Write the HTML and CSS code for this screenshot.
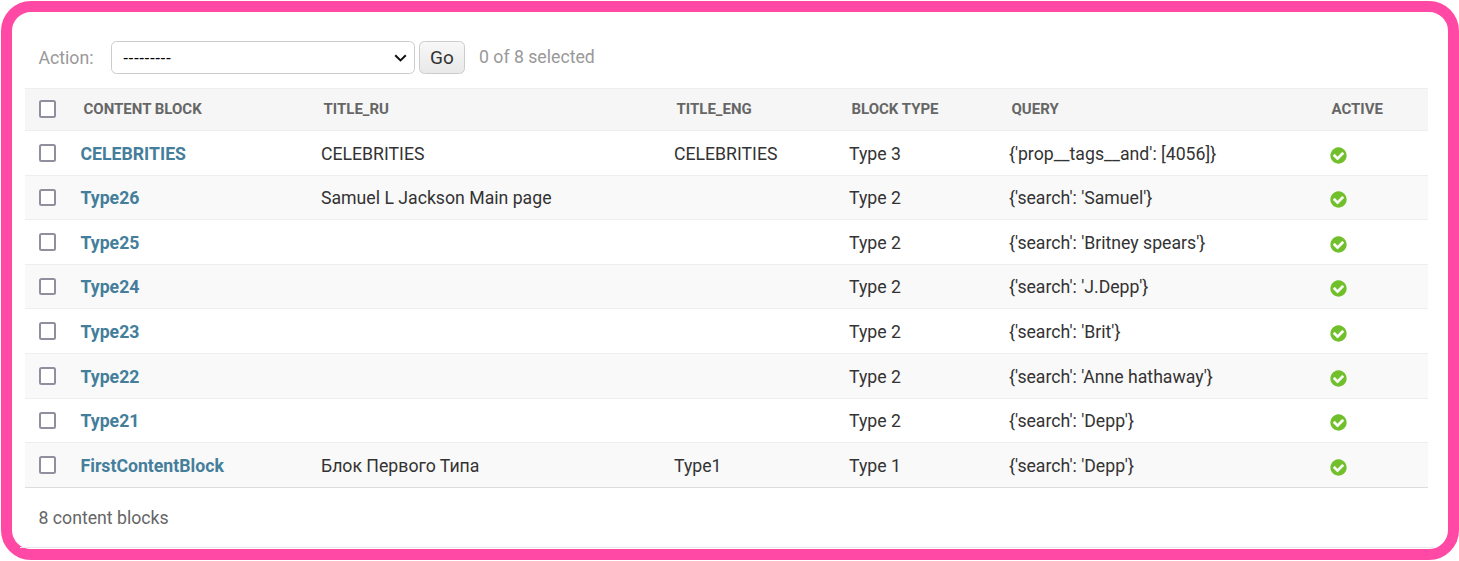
FILE: index.html
```html
<!DOCTYPE html>
<html lang="en">
<head>
<meta charset="utf-8">
<title>Content blocks</title>
<link rel="stylesheet" href="styles.css">
</head>
<body>
<main class="frame">
  <form class="actions">
    <label class="action-label" for="action">Action:</label>
    <select id="action" class="action-select"><option>---------</option></select>
    <button type="button" class="go">Go</button>
    <span class="counter">0 of 8 selected</span>
  </form>
  <table class="results">
    <colgroup>
      <col class="c-check"><col class="c-name"><col class="c-ru"><col class="c-eng"><col class="c-type"><col class="c-query"><col class="c-active">
    </colgroup>
    <thead>
      <tr>
        <th class="check"><span class="box"></span></th>
        <th><span class="th-text">CONTENT BLOCK</span></th>
        <th><span class="th-text">TITLE_RU</span></th>
        <th><span class="th-text">TITLE_ENG</span></th>
        <th><span class="th-text">BLOCK TYPE</span></th>
        <th><span class="th-text">QUERY</span></th>
        <th><span class="th-text">ACTIVE</span></th>
      </tr>
    </thead>
    <tbody>
      <tr>
        <td class="check"><span class="box"></span></td>
        <td><a href="#">CELEBRITIES</a></td><td>CELEBRITIES</td><td>CELEBRITIES</td><td>Type 3</td><td>{'prop__tags__and': [4056]}</td>
        <td><svg class="yes" viewBox="0 0 1792 1792"><path fill="#70bf2b" d="M1412 734q0-28-18-46l-91-90q-19-19-45-19t-45 19l-408 407-226-226q-19-19-45-19t-45 19l-91 90q-18 18-18 46 0 27 18 45l362 362q19 19 45 19 27 0 46-19l543-543q18-18 18-45zm252 162q0 209-103 385.5t-279.5 279.5-385.5 103-385.5-103-279.5-279.5-103-385.5 103-385.5 279.5-279.5 385.5-103 385.5 103 279.5 279.5 103 385.5z"/></svg></td>
      </tr>
      <tr>
        <td class="check"><span class="box"></span></td>
        <td><a href="#">Type26</a></td><td>Samuel L Jackson Main page</td><td></td><td>Type 2</td><td>{'search': 'Samuel'}</td>
        <td><svg class="yes" viewBox="0 0 1792 1792"><path fill="#70bf2b" d="M1412 734q0-28-18-46l-91-90q-19-19-45-19t-45 19l-408 407-226-226q-19-19-45-19t-45 19l-91 90q-18 18-18 46 0 27 18 45l362 362q19 19 45 19 27 0 46-19l543-543q18-18 18-45zm252 162q0 209-103 385.5t-279.5 279.5-385.5 103-385.5-103-279.5-279.5-103-385.5 103-385.5 279.5-279.5 385.5-103 385.5 103 279.5 279.5 103 385.5z"/></svg></td>
      </tr>
      <tr>
        <td class="check"><span class="box"></span></td>
        <td><a href="#">Type25</a></td><td></td><td></td><td>Type 2</td><td>{'search': 'Britney spears'}</td>
        <td><svg class="yes" viewBox="0 0 1792 1792"><path fill="#70bf2b" d="M1412 734q0-28-18-46l-91-90q-19-19-45-19t-45 19l-408 407-226-226q-19-19-45-19t-45 19l-91 90q-18 18-18 46 0 27 18 45l362 362q19 19 45 19 27 0 46-19l543-543q18-18 18-45zm252 162q0 209-103 385.5t-279.5 279.5-385.5 103-385.5-103-279.5-279.5-103-385.5 103-385.5 279.5-279.5 385.5-103 385.5 103 279.5 279.5 103 385.5z"/></svg></td>
      </tr>
      <tr>
        <td class="check"><span class="box"></span></td>
        <td><a href="#">Type24</a></td><td></td><td></td><td>Type 2</td><td>{'search': 'J.Depp'}</td>
        <td><svg class="yes" viewBox="0 0 1792 1792"><path fill="#70bf2b" d="M1412 734q0-28-18-46l-91-90q-19-19-45-19t-45 19l-408 407-226-226q-19-19-45-19t-45 19l-91 90q-18 18-18 46 0 27 18 45l362 362q19 19 45 19 27 0 46-19l543-543q18-18 18-45zm252 162q0 209-103 385.5t-279.5 279.5-385.5 103-385.5-103-279.5-279.5-103-385.5 103-385.5 279.5-279.5 385.5-103 385.5 103 279.5 279.5 103 385.5z"/></svg></td>
      </tr>
      <tr>
        <td class="check"><span class="box"></span></td>
        <td><a href="#">Type23</a></td><td></td><td></td><td>Type 2</td><td>{'search': 'Brit'}</td>
        <td><svg class="yes" viewBox="0 0 1792 1792"><path fill="#70bf2b" d="M1412 734q0-28-18-46l-91-90q-19-19-45-19t-45 19l-408 407-226-226q-19-19-45-19t-45 19l-91 90q-18 18-18 46 0 27 18 45l362 362q19 19 45 19 27 0 46-19l543-543q18-18 18-45zm252 162q0 209-103 385.5t-279.5 279.5-385.5 103-385.5-103-279.5-279.5-103-385.5 103-385.5 279.5-279.5 385.5-103 385.5 103 279.5 279.5 103 385.5z"/></svg></td>
      </tr>
      <tr>
        <td class="check"><span class="box"></span></td>
        <td><a href="#">Type22</a></td><td></td><td></td><td>Type 2</td><td>{'search': 'Anne hathaway'}</td>
        <td><svg class="yes" viewBox="0 0 1792 1792"><path fill="#70bf2b" d="M1412 734q0-28-18-46l-91-90q-19-19-45-19t-45 19l-408 407-226-226q-19-19-45-19t-45 19l-91 90q-18 18-18 46 0 27 18 45l362 362q19 19 45 19 27 0 46-19l543-543q18-18 18-45zm252 162q0 209-103 385.5t-279.5 279.5-385.5 103-385.5-103-279.5-279.5-103-385.5 103-385.5 279.5-279.5 385.5-103 385.5 103 279.5 279.5 103 385.5z"/></svg></td>
      </tr>
      <tr>
        <td class="check"><span class="box"></span></td>
        <td><a href="#">Type21</a></td><td></td><td></td><td>Type 2</td><td>{'search': 'Depp'}</td>
        <td><svg class="yes" viewBox="0 0 1792 1792"><path fill="#70bf2b" d="M1412 734q0-28-18-46l-91-90q-19-19-45-19t-45 19l-408 407-226-226q-19-19-45-19t-45 19l-91 90q-18 18-18 46 0 27 18 45l362 362q19 19 45 19 27 0 46-19l543-543q18-18 18-45zm252 162q0 209-103 385.5t-279.5 279.5-385.5 103-385.5-103-279.5-279.5-103-385.5 103-385.5 279.5-279.5 385.5-103 385.5 103 279.5 279.5 103 385.5z"/></svg></td>
      </tr>
      <tr>
        <td class="check"><span class="box"></span></td>
        <td><a href="#">FirstContentBlock</a></td><td>Блок Первого Типа</td><td>Type1</td><td>Type 1</td><td>{'search': 'Depp'}</td>
        <td><svg class="yes" viewBox="0 0 1792 1792"><path fill="#70bf2b" d="M1412 734q0-28-18-46l-91-90q-19-19-45-19t-45 19l-408 407-226-226q-19-19-45-19t-45 19l-91 90q-18 18-18 46 0 27 18 45l362 362q19 19 45 19 27 0 46-19l543-543q18-18 18-45zm252 162q0 209-103 385.5t-279.5 279.5-385.5 103-385.5-103-279.5-279.5-103-385.5 103-385.5 279.5-279.5 385.5-103 385.5 103 279.5 279.5 103 385.5z"/></svg></td>
      </tr>
    </tbody>
  </table>
  <p class="paginator">8 content blocks</p>
</main>
</body>
</html>
```

FILE: styles.css
```css
* { box-sizing: border-box; }
html, body { margin: 0; height: 100%; background: #fff; }
body { padding: 1px 0 1px 1px; font-family: Roboto, "Noto Sans", sans-serif; color: #333; overflow: hidden; }
.frame {
  height: 559px;
  border: 11px solid #ff49a4;
  border-radius: 30px;
  padding: 0 19px 1px 13px;
  background: #fff;
  display: flex;
  flex-direction: column;
}
.actions {
  flex: none;
  height: 76px;
  padding: 29px 0 0 13.5px;
  display: flex;
  align-items: flex-start;
  font-size: 17.68px;
}
.action-label { color: #999; width: 72.5px; line-height: 34px; }
.action-select {
  appearance: none;
  width: 304px;
  height: 33px;
  border: 1px solid #ccc;
  border-radius: 5.5px;
  background: #fff url("data:image/svg+xml,%3Csvg xmlns='http://www.w3.org/2000/svg' width='13' height='8' viewBox='0 0 13 8'%3E%3Cpath d='M1.2 1.2 6.5 6.4 11.8 1.2' fill='none' stroke='%23111' stroke-width='2'/%3E%3C/svg%3E") no-repeat right 7px center;
  color: #000;
  font-family: "Liberation Sans", sans-serif;
  font-size: 16px;
  padding: 0 24px 0 11px;
}
.go {
  margin-left: 4px;
  width: 46px;
  height: 33px;
  border: 1px solid #ccc;
  border-radius: 5.5px;
  background: linear-gradient(#f8f8f8, #e8e8e8);
  color: #333;
  font: 19px Roboto, sans-serif;
  padding: 0;
}
.counter { margin-left: 14px; color: #999; line-height: 33px; }
.results { flex: none; width: 1403px; border-collapse: collapse; table-layout: fixed; font-size: 17.68px; }
.c-check { width: 43px; }
.c-name { width: 240px; }
.c-ru { width: 353px; }
.c-eng { width: 175px; }
.c-type { width: 160px; }
.c-query { width: 320px; }
.c-active { width: 112px; }
thead tr { height: 42px; background: #f6f6f6; }
th {
  padding: 0 13px 1px;
  text-align: left;
  font-size: 15px;
  font-weight: 700;
  color: #666;
  border-top: 1px solid #eee;
  border-bottom: 1px solid #eee;
}
.th-text { padding-left: 2.5px; }
tbody tr { height: 45px; }
tbody tr:nth-child(2), tbody tr:nth-child(4), tbody tr:nth-child(7) { height: 44px; }
tbody tr:nth-child(even) { background: #f9f9f9; }
td { padding: 2px 13px 0; border-bottom: 1px solid #eee; }
tbody tr:nth-child(2) td, tbody tr:nth-child(4) td, tbody tr:nth-child(7) td { padding-top: 1px; }
tbody tr:last-child td { border-bottom: 1.5px solid #ddd; }
td a { color: #447e9b; font-weight: 700; text-decoration: none; margin-left: -0.5px; }
th.check { padding: 0 0 1px 13.5px; }
td.check, tbody tr:nth-child(n) td.check { padding: 0 0 0 13.5px; }
.box {
  display: block;
  width: 17.5px;
  height: 17.5px;
  border: 2px solid #8f8f9d;
  border-radius: 2.5px;
  background: #fff;
}
.yes { display: block; width: 19px; height: 19px; margin: 2px 0 0 -0.5px; }
.paginator {
  flex: 1;
  margin: 0 -5px;
  padding: 18px 5px 0 18.5px;
  font-size: 17.68px;
  line-height: 24px;
  color: #666;
  border-bottom: 1px solid #e8e8e8;
}
```
